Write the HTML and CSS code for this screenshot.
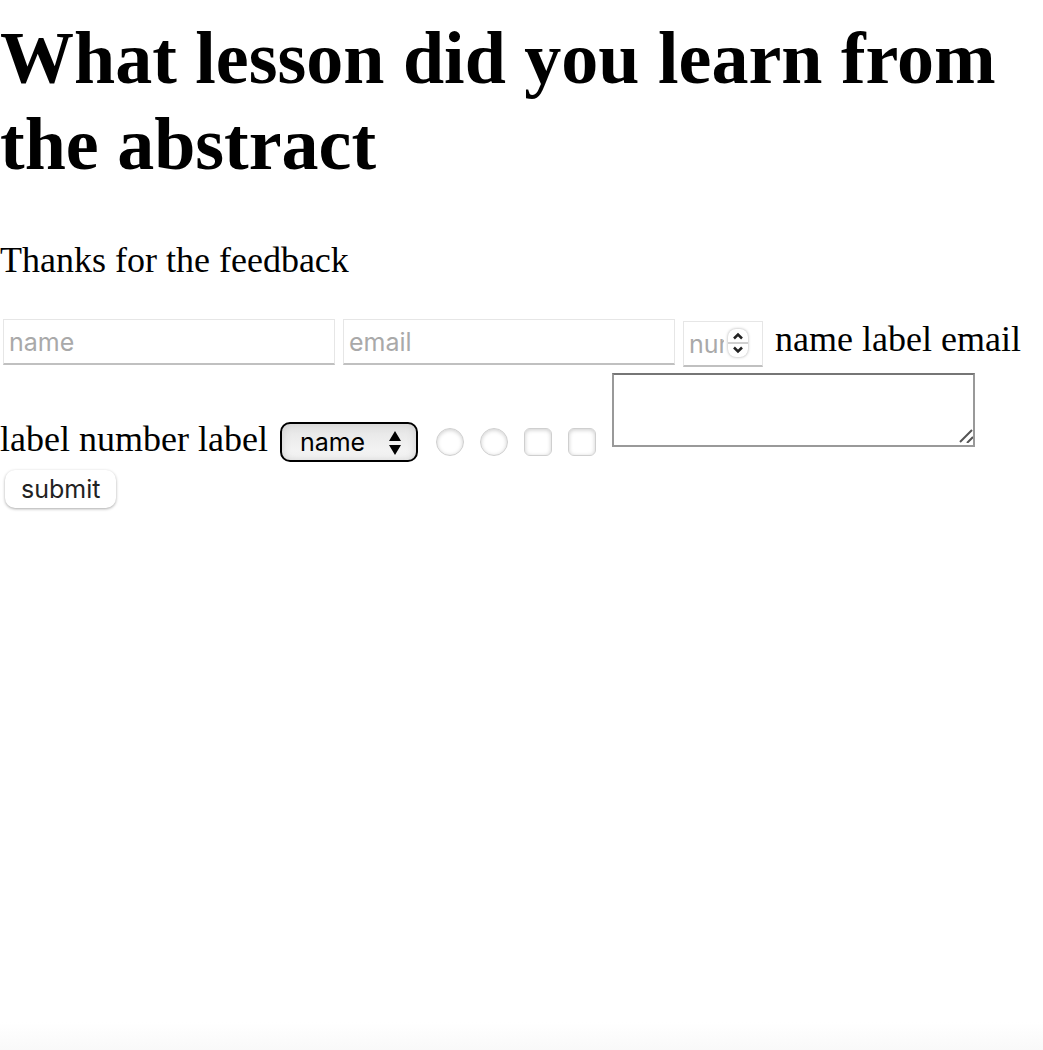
FILE: index.html
```html
<!DOCTYPE html>
<html lang="en">
<head>
<meta charset="utf-8">
<meta name="viewport" content="width=device-width, initial-scale=1">
<title>Feedback</title>
<link rel="stylesheet" href="styles.css">
</head>
<body>
<h1 class="title">What lesson did you learn from the abstract</h1>
<p class="thanks">Thanks for the feedback</p>
<form class="form">
<input class="field" id="name" type="text" placeholder="name"><input class="field" id="email" type="email" placeholder="email"><span class="number"><input class="field field-number" id="number" type="number" placeholder="number"><svg class="stepper" viewBox="0 0 20 28" aria-hidden="true"><path class="stepper-line" d="M0 14H20"/><path class="stepper-arrow" d="M6 9.500L10 5.500L14 9.500M6 18.500L10 22.500L14 18.500"/></svg></span>
<label for="name">name label</label>
<label for="email">email label</label>
<label for="number">number label</label>
<span class="picker"><select class="select" aria-label="name"><option>name</option></select><svg class="picker-arrows" viewBox="0 0 12 24" aria-hidden="true"><path d="M0 10L6 0L12 10ZM0 14H12L6 24Z"/></svg></span><input class="choice radio" type="radio" name="choice" aria-label="First choice"><input class="choice radio" type="radio" name="choice" aria-label="Second choice"><input class="choice" type="checkbox" aria-label="First option"><input class="choice" type="checkbox" aria-label="Second option"><span class="comment"><textarea class="textarea" aria-label="Comments"></textarea><svg class="grip" viewBox="0 0 14 14" aria-hidden="true"><path d="M1 13L13 1M8 14L14 8"/></svg></span>
<button class="submit" type="submit">submit</button>
</form>
</body>
</html>
```

FILE: styles.css
```css
* {
  box-sizing: border-box;
}

body {
  display: flow-root;
  min-height: 100vh;
  margin: 0;
  background: #fff linear-gradient(to top, #f9f9f9, #fff) no-repeat bottom / 100% 28px;
  color: #000;
  font-family: "Liberation Serif", "Times New Roman", serif;
  font-size: 36px;
  line-height: 42px;
}

.title {
  margin: 15px 0 52px;
  font-size: 74px;
  line-height: 86px;
}

.thanks {
  margin: 0 0 37px;
}

.form {
  padding-bottom: 20px;
}

.field,
.select,
.submit {
  appearance: none;
  font-family: Inter, "Liberation Sans", sans-serif;
  font-size: 25px;
  line-height: 30px;
}

.field {
  width: 332px;
  height: 46px;
  margin: 0 5px 0 3px;
  padding: 2px 5px 0;
  border: 1px solid #e6e6e6;
  border-bottom: 2px solid #c0c0c0;
  border-radius: 0;
  background: #fff;
}

.field::placeholder {
  color: #a9a9a9;
  opacity: 1;
}

.number,
.picker,
.comment {
  position: relative;
  display: inline-block;
}

.number {
  vertical-align: -2px;
}

.field-number {
  width: 80px;
  margin-right: 3px;
  padding-right: 38px;
  appearance: textfield;
}

.field-number::-webkit-inner-spin-button {
  display: none;
}

.stepper {
  position: absolute;
  top: 9px;
  right: 18px;
  width: 20px;
  height: 28px;
  border-radius: 8px;
  background: #fff;
  box-shadow: 0 0 3px #aaa;
  fill: none;
}

.stepper-line {
  stroke: #d0d0d0;
  stroke-width: 2;
}

.stepper-arrow {
  stroke: #222;
  stroke-width: 2.5;
}

.picker {
  margin: 0 14px 0 3px;
}

.select {
  width: 138px;
  height: 40px;
  padding: 0 18px;
  border: 2px solid #000;
  border-radius: 10px;
  background: linear-gradient(#e4e4e4, #f8f8f8);
  box-shadow: inset 0 0 8px #ccc;
  color: #000;
}

.picker-arrows {
  position: absolute;
  top: 13px;
  right: 17px;
  width: 12px;
  height: 24px;
  pointer-events: none;
}

.choice {
  appearance: none;
  width: 28px;
  height: 28px;
  margin: 0 12px -5px 4px;
  border: 1px solid #cfcfcf;
  border-radius: 6px;
  background: #fff;
  box-shadow: inset 0 1px 4px #ccc;
}

.radio {
  border-radius: 50%;
}

.comment {
  margin-left: 4px;
}

.textarea {
  display: inline-block;
  width: 363px;
  height: 74px;
  margin: 6px 0 4px;
  border: 2px solid #999;
  border-top-color: #767676;
  border-radius: 0;
  resize: none;
  vertical-align: baseline;
}

.grip {
  position: absolute;
  right: 2px;
  bottom: 17px;
  width: 14px;
  height: 14px;
  fill: none;
  stroke: #555;
  stroke-width: 2;
}

.submit {
  height: 38px;
  margin: 8px 5px 0;
  padding: 0 16px;
  border: 0;
  border-radius: 10px;
  background: #fff;
  box-shadow: 0 1px 3px #aaa;
  color: #222;
}
```
